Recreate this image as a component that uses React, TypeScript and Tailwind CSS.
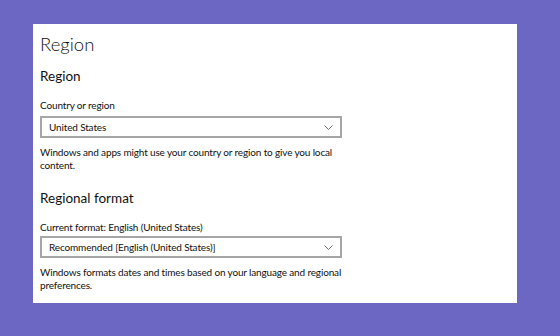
import React from "react";

function Chevron() {
  return (
    <svg width="9" height="5" viewBox="0 0 9 5" className="shrink-0">
      <path d="M0.5 0.5 L4.5 4.5 L8.5 0.5" fill="none" stroke="#6b6b6b" strokeWidth="1" />
    </svg>
  );
}

function Dropdown({ value, className }: { value: string; className?: string }) {
  return (
    <div
      className={
        "flex h-[22px] w-[302px] items-center justify-between border-2 border-[#a6a6a6] bg-white pl-[7px] pr-[7px] " +
        (className ?? "")
      }
    >
      <span className="text-[10px] leading-[14px] tracking-[-0.15px] text-[#111]">{value}</span>
      <Chevron />
    </div>
  );
}

export default function App() {
  return (
    <div
      className="h-[336px] w-[560px] overflow-hidden bg-[#6c67c3] pl-[33px] pt-[24px]"
      style={{ fontFamily: 'Lato, "Noto Sans", sans-serif' }}
    >
      <div className="flex h-[279px] w-[484px] flex-col bg-white pl-[7px] pt-[8px] text-[#111]">
        <h1 className="text-[18.5px] font-light leading-[24px]">Region</h1>
        <h2 className="mt-[10px] text-[13.5px] leading-[20px]">Region</h2>
        <div className="mt-[12px] text-[10px] leading-[14px] tracking-[-0.15px]">Country or region</div>
        <Dropdown value="United States" className="mt-[4px]" />
        <p className="mt-[8px] w-[302px] text-[10px] leading-[13px] tracking-[-0.15px]">
          Windows and apps might use your country or region to give you local content.
        </p>
        <h2 className="mt-[16px] text-[13.5px] leading-[20px]">Regional format</h2>
        <div className="mt-[12px] text-[10px] leading-[14px] tracking-[-0.15px]">Current format: English (United States)</div>
        <Dropdown value="Recommended [English (United States)]" className="mt-[2px]" />
        <p className="mt-[8px] w-[302px] text-[10px] leading-[13px] tracking-[-0.15px]">
          Windows formats dates and times based on your language and regional preferences.
        </p>
      </div>
    </div>
  );
}
